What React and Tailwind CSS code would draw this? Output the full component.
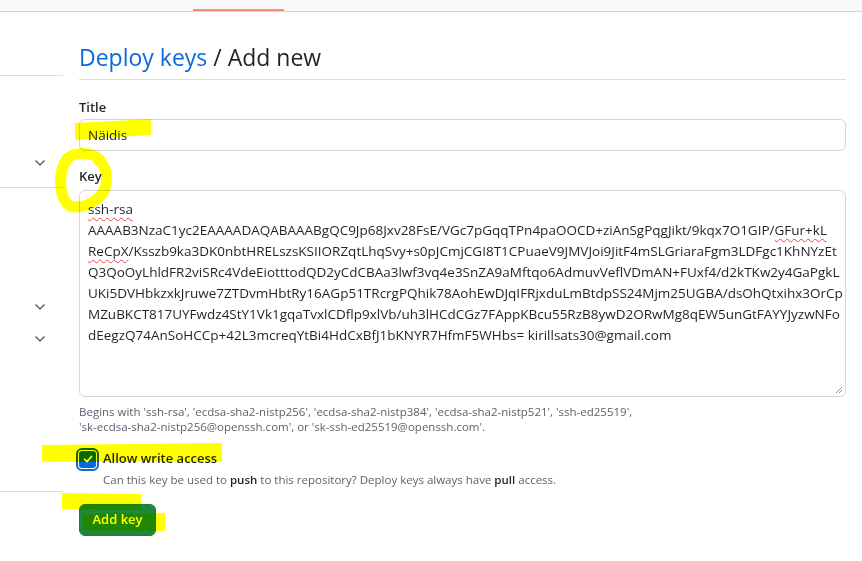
import React from "react";

function Chevron() {
  return (
    <svg width="10" height="6" viewBox="0 0 10 6" className="block">
      <path d="M1 1 L5 5 L9 1" fill="none" stroke="#59636e" strokeWidth="1.5" strokeLinecap="round" strokeLinejoin="round" />
    </svg>
  );
}

const keyLines = [
  "AAAAB3NzaC1yc2EAAAADAQABAAABgQC9Jp68Jxv28FsE/VGc7pGqqTPn4paOOCD+ziAnSgPqgJikt/9kqx7O1GIP/",
  "Q3QoOyLhldFR2viSRc4VdeEiotttodQD2yCdCBAa3lwf3vq4e3SnZA9aMftqo6AdmuvVeflVDmAN+FUxf4/d2kTKw2y4GaPgkL",
  "UKi5DVHbkzxkJruwe7ZTDvmHbtRy16AGp51TRcrgPQhik78AohEwDJqIFRjxduLmBtdpSS24Mjm25UGBA/dsOhQtxihx3OrCp",
  "MZuBKCT817UYFwdz4StY1Vk1gqaTvxlCDflp9xlVb/uh3lHCdCGz7FAppKBcu55RzB8ywD2ORwMg8qEW5unGtFAYYJyzwNFo",
  "dEegzQ74AnSoHCCp+42L3mcreqYtBi4HdCxBfJ1bKNYR7HfmF5WHbs= kirillsats30@gmail.com",
];

const wavy = "underline decoration-wavy decoration-[#e5484d] decoration-1 underline-offset-[3px]";

export default function App() {
  return (
    <div className="relative w-[862px] h-[561px] bg-white overflow-hidden font-['Open_Sans',sans-serif] text-[#1f2328]">
      {/* top bar */}
      <div className="relative h-[12px] bg-[#f6f8fa] border-b border-[#d1d9e0]">
        <div className="absolute bottom-0 left-[193px] w-[91px] h-[2px] bg-[#fd8c73]" />
      </div>

      <div className="flex">
        {/* sidebar */}
        <div className="w-[63px] shrink-0">
          <div className="h-[64px] border-b border-[#d8dee4]" />
          <div className="h-[112px] border-b border-[#d8dee4] pt-[84px] pl-[35px]">
            <Chevron />
          </div>
          <div className="h-[304px] border-b border-[#d8dee4] pt-[116px] pl-[35px] flex flex-col gap-[26px]">
            <Chevron />
            <Chevron />
          </div>
        </div>

        {/* main */}
        <div className="ml-[16px] w-[767px]">
          <h1 className="mt-[27px] text-[23px] leading-[36px] pb-[4px] border-b border-[#d8dee4] font-normal">
            <span className="text-[#0969da]">Deploy keys</span>
            <span> / Add new</span>
          </h1>

          <div className="mt-[17px] h-[21px] text-[13px] leading-[21px] font-semibold">Title</div>
          <div className="mt-[1px] h-[32px] border border-[#d1d9e0] rounded-[6px] px-[8px] text-[13.5px] leading-[30px]">
            Näidis
          </div>

          <div className="mt-[15px] h-[21px] text-[13px] leading-[21px] font-semibold">Key</div>
          <div className="relative mt-[3px] h-[207px] border border-[#d1d9e0] rounded-[6px] px-[8px] pt-[8px] text-[13.5px] leading-[21px] overflow-hidden">
            <div className="whitespace-nowrap"><span className={wavy}>ssh-rsa</span></div>
            <div className="whitespace-nowrap">
              {keyLines[0]}
              <span className={wavy}>GFur+kL</span>
            </div>
            <div className="whitespace-nowrap">
              <span className={wavy}>ReCpX</span>/Ksszb9ka3DK0nbtHRELszsKSIIORZqtLhqSvy+s0pJCmjCGI8T1CPuaeV9JMVJoi9JitF4mSLGriaraFgm3LDFgc1KhNYzEt
            </div>
            {keyLines.slice(1).map((l, i) => (
              <div key={i} className="whitespace-nowrap">{l}</div>
            ))}
            <svg width="8" height="8" viewBox="0 0 8 8" className="absolute right-[2px] bottom-[2px]">
              <path d="M7 1 L1 7 M7 4 L4 7" stroke="#8c959f" strokeWidth="1" fill="none" />
            </svg>
          </div>

          <div className="mt-[8px] text-[11.5px] leading-[14.5px] text-[#59636e]">
            Begins with 'ssh-rsa', 'ecdsa-sha2-nistp256', 'ecdsa-sha2-nistp384', 'ecdsa-sha2-nistp521', 'ssh-ed25519',
            <br />
            'sk-ecdsa-sha2-nistp256@openssh.com', or 'sk-ssh-ed25519@openssh.com'.
          </div>

          <div className="mt-[14px] flex items-start">
            <div className="mt-[2.5px] w-[17px] h-[17px] rounded-[3px] bg-[#0969da] outline-2 outline-[#0969da] outline-offset-1 flex items-center justify-center shrink-0">
              <svg width="12" height="12" viewBox="0 0 12 12">
                <path d="M2.5 6.2 L5 8.6 L9.6 3.4" fill="none" stroke="#ffffff" strokeWidth="1.6" strokeLinecap="round" strokeLinejoin="round" />
              </svg>
            </div>
            <div className="ml-[7px]">
              <div className="text-[13px] leading-[21px] font-semibold">Allow write access</div>
              <div className="mt-[2px] text-[11.5px] leading-[18px] text-[#59636e]">
                Can this key be used to <span className="font-semibold text-[#1f2328]">push</span> to this repository? Deploy keys always have <span className="font-semibold text-[#1f2328]">pull</span> access.
              </div>
            </div>
          </div>

          <button className="mt-[15px] h-[32px] w-[77px] rounded-[6px] bg-[#1f883d] border border-[#1a7f37] text-white text-[13px] font-semibold">
            Add key
          </button>
        </div>
      </div>

      {/* yellow highlighter annotations */}
      <svg className="absolute inset-0 pointer-events-none mix-blend-multiply" width="862" height="561" viewBox="0 0 862 561">
        <g fill="#ffff00" stroke="none">
          <path d="M75 123 L151 119 L151 135 L75 140 Z" />
          <path d="M42 445 L222 443 L222 461 L42 462 Z" />
          <path d="M62 493 L141 494 L141 510 L62 509 Z" />
          <path d="M83 514 L165 513 L165 531 L83 530 Z" />
        </g>
        <path d="M100 160 C92 151 70 150 64 164 C58 178 60 200 70 206 C82 210 104 200 106 184 C108 172 104 164 98 160" fill="none" stroke="#ffff00" strokeWidth="11" strokeLinecap="round" />
      </svg>
    </div>
  );
}
